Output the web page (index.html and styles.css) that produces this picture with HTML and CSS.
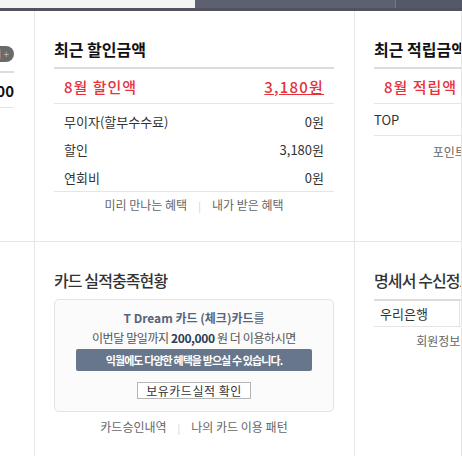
FILE: index.html
```html
<!DOCTYPE html>
<html>
<head>
<meta charset="UTF-8">
<title>카드 이용현황</title>
<link rel="stylesheet" href="styles.css">
</head>
<body>
<div class="topbar">
  <span class="tb-light"></span>
  <span class="tb-mid"></span>
  <span class="tb-right"></span>
</div>

<div class="board">
  <!-- 1행 -->
  <section class="cell cell-left row1">
    <div class="inner">
      <div class="head">
        <h2 class="box-title">결제예정금액</h2>
        <a class="pill">상세 +</a>
      </div>
      <div class="due"><span>9월 결제예정</span><b>1,253,400</b></div>
    </div>
  </section>

  <section class="cell row1">
    <div class="inner">
      <h2 class="box-title">최근 할인금액</h2>
      <div class="sum"><span>8월 할인액</span><a class="sum-val">3,180원</a></div>
      <ul class="rows">
        <li><span>무이자(할부수수료)</span><span>0원</span></li>
        <li><span>할인</span><span>3,180원</span></li>
        <li><span>연회비</span><span>0원</span></li>
      </ul>
      <p class="links"><a>미리 만나는 혜택</a><span class="sep">|</span><a>내가 받은 혜택</a></p>
    </div>
  </section>

  <section class="cell row1">
    <div class="inner">
      <h2 class="box-title">최근 적립금액</h2>
      <div class="sum"><span>8월 적립액</span><a class="sum-val">1,520P</a></div>
      <ul class="rows rows-pt">
        <li><span>TOP</span><span>1,520P</span></li>
      </ul>
      <p class="links links-pt"><a>포인트 적립내역</a><span class="sep">|</span><a>포인트 전환</a></p>
    </div>
  </section>

  <!-- 2행 -->
  <section class="cell cell-left"></section>

  <section class="cell">
    <div class="inner">
      <h2 class="box-title sub">카드 실적충족현황</h2>
      <div class="perf">
        <p class="perf-card"><b>T Dream 카드 (체크)카드</b>를</p>
        <p class="perf-msg">이번달 말일까지 <b>200,000</b> 원 더 이용하시면</p>
        <p class="perf-bar">익월에도 다양한 혜택을 받으실 수 있습니다.</p>
        <button class="perf-btn">보유카드실적 확인</button>
      </div>
      <p class="links links-card"><a>카드승인내역</a><span class="sep">|</span><a>나의 카드 이용 패턴</a></p>
    </div>
  </section>

  <section class="cell">
    <div class="inner">
      <h2 class="box-title sub">명세서 수신정보</h2>
      <table class="recv">
        <tr><td class="recv-bank">우리은행</td><td>이메일 명세서</td></tr>
      </table>
      <p class="links links-recv"><a>회원정보변경</a><span class="sep">|</span><a>명세서 수신방법 변경</a></p>
    </div>
  </section>
</div>
</body>
</html>
```

FILE: styles.css
```css
*{
  box-sizing: border-box;
  margin: 0;
  padding: 0;
}
body{
  width: 462px;
  height: 456px;
  overflow: hidden;
  background: #fff;
  color: #333;
  font-family: "Noto Sans CJK KR", "Noto Sans", sans-serif;
}
a{
  color: inherit;
  text-decoration: none;
}
ul{
  list-style: none;
}

/* 상단 메뉴 바 */
.topbar{
  display: flex;
  height: 11px;
  border-bottom: 3px solid #50525e;
}
.tb-light{
  width: 195px;
  background: #f4f4f4;
}
.tb-mid{
  width: 201px;
  background: #5d616f;
  border-right: 1px solid #747886;
}
.tb-right{
  flex: 1;
  background: #555967;
}

/* 3단 박스 */
.board{
  display: grid;
  grid-template-columns: 35px 320px 107px;
  grid-template-rows: 231px 1fr;
  height: 445px;
}
.cell{
  display: flex;
  overflow: hidden;
  padding: 27px 20px 0 19px;
  border-right: 1px solid #e6e6e6;
}
.row1{
  border-bottom: 1px solid #e6e6e6;
}
.cell-left{
  justify-content: flex-end;
  padding-left: 0;
}
.inner{
  width: 280px;
  flex-shrink: 0;
}

.box-title{
  height: 22px;
  line-height: 22px;
  margin-bottom: 7px;
  font-size: 16px;
  font-weight: 700;
  color: #111;
  white-space: nowrap;
}
.box-title.sub{
  margin-bottom: 8px;
  font-weight: 500;
  color: #333;
  letter-spacing: -0.9px;
}

/* 왼쪽 잘린 박스 */
.head{
  display: flex;
  justify-content: space-between;
  align-items: flex-end;
  height: 33px;
  padding-bottom: 9px;
}
.head .box-title{
  margin: 0;
}
.pill{
  height: 16px;
  line-height: 16px;
  padding: 0 5px 0 7px;
  border-radius: 8px;
  background: #6a6a6a;
  color: #bbb;
  font-size: 10px;
}
.due{
  display: flex;
  justify-content: space-between;
  align-items: center;
  height: 37px;
  border-top: 2px solid #dcdcdc;
  border-bottom: 1px solid #e5e5e5;
  font-size: 15px;
}
.due b{
  color: #111;
}

/* 할인/적립 요약 */
.sum{
  display: flex;
  justify-content: space-between;
  align-items: center;
  height: 37px;
  padding: 0 10px;
  border-top: 2px solid #dcdcdc;
  border-bottom: 1px solid #e5e5e5;
  color: #e6323b;
  font-size: 15px;
  font-weight: 500;
  letter-spacing: 1px;
}
.sum-val{
  text-decoration: underline;
  letter-spacing: 1.2px;
}
.rows{
  padding-top: 3px;
  border-bottom: 1px solid #e5e5e5;
}
.rows li{
  display: flex;
  justify-content: space-between;
  align-items: center;
  height: 28px;
  padding: 0 10px;
  font-size: 13px;
}
.rows-pt{
  padding-top: 0;
}
.rows-pt li{
  height: 31px;
  padding: 0;
}

.links{
  height: 25px;
  line-height: 25px;
  text-align: center;
  font-size: 12px;
  color: #666;
  white-space: nowrap;
}
.links .sep{
  margin: 0 11px;
  color: #ccc;
  font-size: 10px;
}
.links-pt{
  height: 31px;
  line-height: 31px;
}
.links-card{
  margin-top: 2px;
}
.links-recv{
  height: 27px;
  line-height: 27px;
}

/* 카드 실적 */
.perf{
  padding: 8px 0 12px;
  border: 1px solid #e3e3e3;
  border-radius: 5px;
  background: #fbfbfb;
  text-align: center;
}
.perf-card,
.perf-msg{
  height: 20px;
  line-height: 20px;
  font-size: 12px;
  white-space: nowrap;
}
.perf-card{
  color: #56657c;
}
.perf-msg{
  color: #555;
  letter-spacing: -0.4px;
}
.perf-msg b{
  color: #2c3d58;
}
.perf-bar{
  width: 236px;
  height: 22px;
  line-height: 22px;
  margin: 1px auto 0;
  border-radius: 2px;
  background: #67768b;
  color: #fff;
  font-size: 11px;
  font-weight: 700;
  letter-spacing: -0.9px;
}
.perf-btn{
  display: block;
  height: 17px;
  line-height: 15px;
  margin: 11px auto 0;
  padding: 0 8px;
  border: 1px solid #b5b5b5;
  background: #fff;
  color: #333;
  font-family: inherit;
  font-size: 12px;
  letter-spacing: 0.5px;
}

/* 명세서 수신정보 */
.recv{
  width: 280px;
  border-collapse: collapse;
  border-top: 2px solid #dcdcdc;
  border-bottom: 1px solid #e5e5e5;
  font-size: 13px;
}
.recv td{
  height: 26px;
  padding: 0 6px;
  white-space: nowrap;
}
.recv-bank{
  width: 85px;
  border-right: 1px solid #e5e5e5;
}
```
